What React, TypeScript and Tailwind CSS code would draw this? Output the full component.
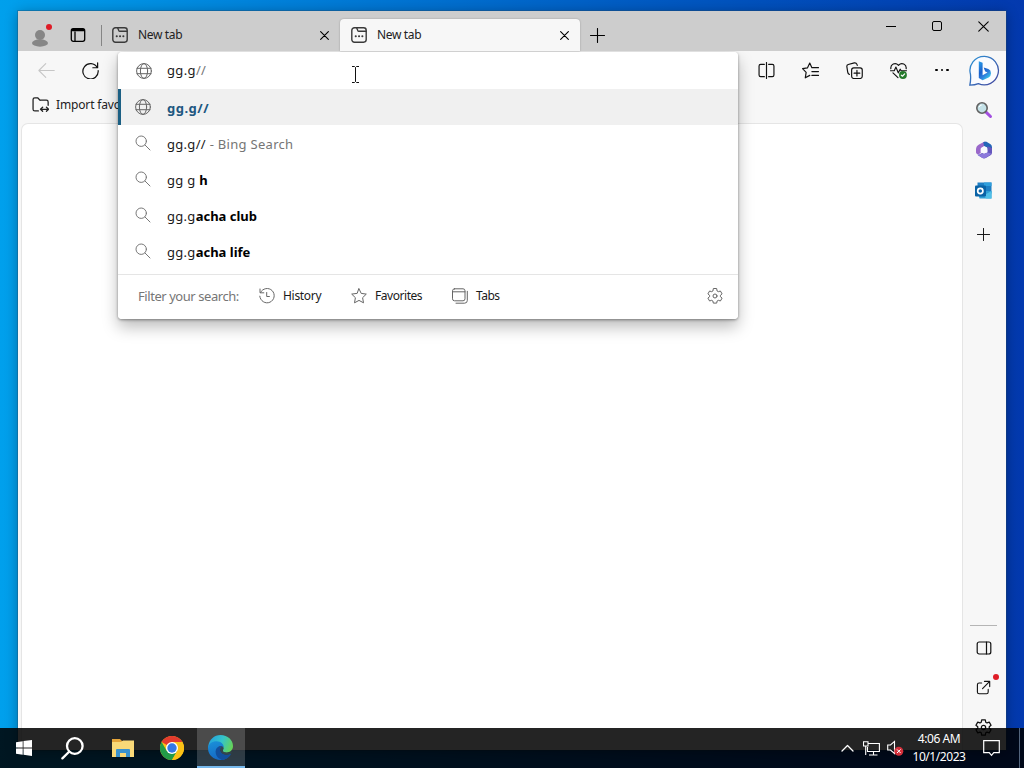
import type { ReactNode } from "react";

interface IconProps {
  size?: number;
  box?: number;
  width?: number;
  className?: string;
  children: ReactNode;
}

const Icon = ({ size = 16, box = 16, width = 1, className = "", children }: IconProps) => (
  <svg
    width={size}
    height={size}
    viewBox={`0 0 ${box} ${box}`}
    fill="none"
    stroke="currentColor"
    strokeWidth={width}
    strokeLinecap="round"
    strokeLinejoin="round"
    className={`shrink-0 ${className}`}
  >
    {children}
  </svg>
);

const GEAR =
  "M6.3 .9 5.9 3 4.7 3.7 2.6 3 .9 5.9 2.6 7.3V8.7L.9 10.1 2.6 13 4.7 12.3 5.9 13 6.3 15.1H9.7L10.1 13 11.3 12.3 13.4 13 15.1 10.1 13.4 8.7V7.3L15.1 5.9 13.4 3 11.3 3.7 10.1 3 9.7 .9Z";
const STAR =
  "M8 .8 10.2 5.4 15.3 6.1 11.6 9.7 12.5 14.8 8 12.4 3.5 14.8 4.4 9.7.7 6.1 5.8 5.4Z";

const GearIcon = ({ size = 16, width = 1 }: { size?: number; width?: number }) => (
  <Icon size={size} width={width}>
    <path d={GEAR} />
    <circle cx="8" cy="8" r="2" />
  </Icon>
);

const GlobeIcon = () => (
  <Icon width={1} className="text-[#666]">
    <circle cx="8" cy="8" r="7.4" />
    <ellipse cx="8" cy="8" rx="3.6" ry="7.4" />
    <path d="M1 5.3H15M1 10.7H15" />
  </Icon>
);

const NewTabIcon = () => (
  <Icon width={1.4} className="text-[#3a3a3a]">
    <rect x=".8" y=".8" width="14.4" height="14.4" rx="2.6" />
    <path d="M5.7 1 6.8 3.6Q7.1 4.2 7.8 4.2H15" />
    <path d="M4.7 9.2h.1M8 9.2h.1M11.3 9.2h.1" strokeWidth="2" />
  </Icon>
);

const CloseIcon = ({ size = 9, width = 1.2 }: { size?: number; width?: number }) => (
  <Icon size={size} box={10} width={width}>
    <path d="M.7.7 9.3 9.3M9.3.7.7 9.3" />
  </Icon>
);

const PlusIcon = ({ size }: { size: number }) => (
  <Icon size={size} box={15} width={1.1}>
    <path d="M7.5.5V14.5M.5 7.5H14.5" />
  </Icon>
);

const Tab = ({ active = false }: { active?: boolean }) => (
  <div
    className={`flex h-8 items-center rounded-t-[4px] pl-[11px] pr-[11px] ${
      active ? "w-[240px] bg-[#f7f7f7] shadow-[0_0_2px_#0004]" : "w-[239px] pr-[10px]"
    }`}
  >
    <NewTabIcon />
    <span className="ml-[10px] flex-1 text-[12px] tracking-[-0.35px] text-[#222]">New tab</span>
    <CloseIcon />
  </div>
);

const TabStrip = () => (
  <div className="flex h-10 shrink-0 items-end bg-[#cdcdcd]">
    <div className="flex h-8 items-center">
      <svg width="24" height="24" viewBox="0 0 24 24" className="ml-[11px]">
        <circle cx="11" cy="12" r="5" fill="#868686" />
        <ellipse cx="11" cy="20" rx="8" ry="3.7" fill="#868686" />
        <circle cx="20" cy="4" r="3" fill="#df1c27" />
      </svg>
      <Icon className="ml-[17px] text-black" width={1.3}>
        <rect x="1.3" y="1.7" width="13.4" height="12.6" rx="2" />
        <path d="M2.3 3H13.7" strokeWidth="2.4" />
        <path d="M5 5V14" />
      </Icon>
      <div className="ml-[15px] h-[21px] w-px bg-[#858585]" />
    </div>
    <div className="-ml-px flex">
      <Tab />
      <Tab active />
    </div>
    <div className="ml-[10px] flex h-8 items-center">
      <PlusIcon size={15} />
    </div>
    <div className="ml-auto flex self-start text-black">
      <div className="flex h-[30px] w-[46px] items-center justify-center">
        <div className="h-px w-[10px] bg-black" />
      </div>
      <div className="flex h-[30px] w-[46px] items-center justify-center">
        <div className="size-[10px] rounded-[2px] border border-black" />
      </div>
      <div className="flex h-[30px] w-[46px] items-center justify-center">
        <CloseIcon size={11} width={1} />
      </div>
    </div>
  </div>
);

const ToolButton = ({ children }: { children: ReactNode }) => (
  <div className="flex w-11 items-center justify-center">{children}</div>
);

const Toolbar = () => (
  <div className="flex h-[38px] shrink-0 pl-[6px] text-[#111]">
    <ToolButton>
      <Icon size={17} className="text-[#c6c6c6]">
        <path d="M15.3 8H.8M7.3 1.5.8 8 7.3 14.5" />
      </Icon>
    </ToolButton>
    <ToolButton>
      <Icon size={17} width={1.15}>
        <path d="M14.3 5.2A7.2 7.2 0 1 0 15.2 8M14.7.8V5.4H10.2" />
      </Icon>
    </ToolButton>
    <div className="-mr-px ml-auto flex">
      <ToolButton>
        <Icon size={17} width={1.1}>
          <path d="M6 2.2H2.5Q1 2.2 1 3.7V12.3Q1 13.8 2.5 13.8H6M10 2.2H13.5Q15 2.2 15 3.7V12.3Q15 13.8 13.5 13.8H10M8 .5V15.5" />
        </Icon>
      </ToolButton>
      <ToolButton>
        <Icon size={17} width={1.1}>
          <path d="M9.3 5.3 7.3 1 5.1 5.6.5 6.3 3.9 9.7 3.1 14.9 7.3 12.6M9.3 5.3H15.5M9.3 9H15.5M9.3 12.6H15.5" />
        </Icon>
      </ToolButton>
      <ToolButton>
        <Icon size={17} width={1.1}>
          <rect x="5.3" y="5.5" width="10" height="10" rx="2" />
          <path d="M10.3 7.8V13.2M7.6 10.5H13M3.2 11.7Q1.8 11 1.6 9.5L.8 4.3Q.6 2.8 2.1 2.3L7.8.8Q9.6.5 10.2 2L10.6 3.2" />
        </Icon>
      </ToolButton>
      <ToolButton>
        <Icon size={17} width={1.1}>
          <path d="M.8 6.2C.3 2.2 4.9-.1 8 3.1 11.1-.1 15.7 2.2 15.2 6.2M.5 8.2H4L5.6 4.8 7.8 10.2 9.6 6.8 10.5 8.2H15.5M2.8 10.2 7.5 14.7" />
          <circle cx="12.2" cy="12.2" r="3.7" fill="#247a2b" stroke="none" />
          <path d="M10.6 12.3 11.7 13.4 13.8 11.2" stroke="#fff" />
        </Icon>
      </ToolButton>
      <ToolButton>
        <div className="flex gap-[3px]">
          <i className="size-[2.5px] rounded-full bg-black" />
          <i className="size-[2.5px] rounded-full bg-black" />
          <i className="size-[2.5px] rounded-full bg-black" />
        </div>
      </ToolButton>
    </div>
  </div>
);

const FavoritesBar = () => (
  <div className="flex h-[34px] shrink-0 items-center pb-[3px] pl-[14px] text-[#222]">
    <Icon size={17} width={1.2}>
      <path d="M6 14H2.6Q1 14 1 12.4V3.3Q1 1.7 2.6 1.7H5.3L7.5 3.9H13.5Q15.2 3.9 15.2 5.6V8.8M5.3 1.8 7.6 4" />
      <path d="M8.2 12.5H15.3M10 10.6 8 12.5 10 14.4M13.6 10.6 15.6 12.5 13.6 14.4" />
    </Icon>
    <span className="ml-[7px] text-[12px] tracking-[-0.15px]">Import favorites</span>
  </div>
);

const BingIcon = () => (
  <svg width="32" height="32" viewBox="0 0 32 32">
    <defs>
      <linearGradient id="bing-ring" x1="0" y1="0" x2="1" y2="1">
        <stop offset="0" stopColor="#2b93d6" />
        <stop offset="1" stopColor="#44449c" />
      </linearGradient>
      <linearGradient id="bing-b" x1="0" y1="0" x2="0.6" y2="1">
        <stop offset="0" stopColor="#2ba0ea" />
        <stop offset="0.5" stopColor="#1a5fcc" />
        <stop offset="0.75" stopColor="#2f7fdc" />
        <stop offset="1" stopColor="#36c4e8" />
      </linearGradient>
    </defs>
    <path
      d="M16.5 1.3A14.3 14.3 0 1 1 10.4 28.7Q7 30.2 1.8 30.2 3 25 2.5 19.5A14.3 14.3 0 0 1 16.5 1.3Z"
      fill="#fafbff"
      stroke="url(#bing-ring)"
      strokeWidth="1.3"
    />
    <path
      d="M10.8 6.2 14.6 7.7V20.3L19.5 17.5 17.2 16.4 15.7 12.4 20.4 14Q23 15 23 18.2 23 21 20.6 22.4L14.6 25.3 10.8 22.9Z"
      fill="url(#bing-b)"
    />
  </svg>
);

const SidebarSearch = () => (
  <svg width="18" height="18" viewBox="0 0 18 18">
    <path d="M11 11.2 15.5 15.5" stroke="#a34fe0" strokeWidth="3" strokeLinecap="round" />
    <circle cx="7" cy="7" r="5.2" fill="#c5e2e8" stroke="#626262" strokeWidth="1.6" />
    <path d="M4.1 6.2Q4.6 4.2 6.8 4" stroke="#fff" fill="none" />
  </svg>
);

const Microsoft365 = () => (
  <svg width="18" height="18" viewBox="0 0 18 18">
    <path d="M9.8.6 4 3.5Q1 5 1 8.5V11.5Q1.4 13.7 3.6 13.2L5.7 12V7.5L11.5 3.8V1Z" fill="#9a68ca" />
    <path d="M8.3.9 11.5.7 15.6 3.3Q17 4.2 17 6.2V11L12.2 8.2V6.6L9 5Z" fill="#2465b8" />
    <path d="M17 7V11.8Q17 13.5 15.5 14.3L10.8 17Q9 17.9 7 16.7L2.3 13.8Q4.5 14 6.3 12.3L12.3 11.8 12.4 5.2Z" fill="#6557bd" />
    <path d="M2.3 13.7 8.6 12.8 12.6 11.4 16.5 12.8 10.8 16.8Q9 17.8 7 16.7Z" fill="#8c79dc" />
    <path d="M6 7.1 9 5.3 12.3 7.1V10.9L9 12.7 5.8 11.1Z" fill="#f9f9ff" />
  </svg>
);

const OutlookIcon = () => (
  <svg width="17" height="17" viewBox="0 0 17 17">
    <rect x="2.5" y=".5" width="14" height="11" fill="#1f7fc4" />
    <path d="M9 .5H16.5V4H9Z" fill="#2f9fdc" />
    <path d="M2.5 9 16.5 9V16.5H4.5Z" fill="#2f9ed4" />
    <path d="M16.5 9 9 13.2 11 16.5H16.5Z" fill="#4fbfe8" />
    <rect x="0" y="3.5" width="11" height="11" rx="1" fill="#0a63a6" />
    <circle cx="5.3" cy="9" r="2.6" fill="none" stroke="#fff" strokeWidth="1.7" />
  </svg>
);

const Sidebar = () => (
  <div className="flex w-[43px] shrink-0 flex-col items-center pr-[2px] text-[#111]">
    <div className="mt-[4px] h-8">
      <BingIcon />
    </div>
    <div className="mt-[5px] flex h-10 items-center pb-[5px]">
      <SidebarSearch />
    </div>
    <div className="flex h-10 items-center pb-[4px]">
      <Microsoft365 />
    </div>
    <div className="flex h-10 items-center pb-[4px]">
      <OutlookIcon />
    </div>
    <div className="mt-[16px]">
      <PlusIcon size={13} />
    </div>
    <div className="mt-auto h-px w-[27px] bg-[#b5b5b5]" />
    <div className="flex h-[43px] items-center">
      <Icon width={1.2}>
        <rect x="1.2" y="2" width="13.6" height="12" rx="2" />
        <path d="M10.5 2V14" />
      </Icon>
    </div>
    <div className="relative flex h-[37px] items-center">
      <Icon width={1.2} size={15}>
        <path d="M6 3.2H3.4Q1.5 3.2 1.5 5.1V12.8Q1.5 14.7 3.4 14.7H11.2Q13 14.7 13 12.8V10M9 1.5H14.6V7M14.3 1.8 7 9.2" />
      </Icon>
      <span className="absolute -right-[8px] top-[5px] size-[6px] rounded-full bg-[#df1c27]" />
    </div>
    <div className="flex h-[44px] items-center pb-[2px]">
      <GearIcon size={17} width={1.2} />
    </div>
  </div>
);

const SearchIcon = () => (
  <Icon width={1} className="mb-[1px] text-[#777]">
    <circle cx="6.2" cy="6.2" r="5.2" />
    <path d="M10 10 15 15" />
  </Icon>
);

const suggestions = [
  { typed: "gg.g//", note: " - Bing Search" },
  { typed: "gg g ", rest: "h" },
  { typed: "gg.g", rest: "acha club" },
  { typed: "gg.g", rest: "acha life" },
];

const AddressPopup = () => (
  <div className="absolute left-[100px] top-[41px] flex h-[267px] w-[620px] flex-col overflow-hidden rounded-[4px] bg-white text-[13px] text-[#1a1a1a]">
    <div className="flex h-[37px] items-center pl-[18px]">
      <GlobeIcon />
      <span className="ml-[15px] mt-px tracking-[0.35px]">
        gg.g<span className="text-[#777]">//</span>
      </span>
    </div>
    <div className="flex h-9 items-center border-l-[3px] border-[#1b5f83] bg-[#f0f0f0] pl-[14px]">
      <GlobeIcon />
      <span className="ml-4 mt-[3px] font-bold tracking-[0.5px] text-[#205780]">gg.g//</span>
    </div>
    {suggestions.map((item, index) => (
      <div key={index} className="flex h-9 items-center pl-[17px]">
        <SearchIcon />
        <span className="ml-4 mt-[3px] whitespace-pre tracking-[0.3px]">
          {item.typed}
          <b className="tracking-[0px] text-black">{item.rest}</b>
          <span className="text-[#757575]">{item.note}</span>
        </span>
      </div>
    ))}
    <div className="mt-[5px] flex h-11 items-center border-t border-[#e5e5e5] pb-px pl-5 pr-[15px] text-[12px] tracking-[-0.3px]">
      <span className="mt-px w-[121px] text-[13px] tracking-[-0.44px] text-[#767676]">Filter your search:</span>
      <div className="flex w-[92px] items-center gap-2">
        <Icon className="text-[#666]">
          <path d="M1 1V4.8H4.8M1.5 4.5A7.2 7.2 0 1 1 .8 8.2M7.7 4.5V8.5H10.4" />
        </Icon>
        History
      </div>
      <div className="flex w-[101px] items-center gap-2 tracking-[-0.45px]">
        <Icon className="text-[#666]">
          <path d={STAR} />
        </Icon>
        Favorites
      </div>
      <div className="flex items-center gap-2 tracking-[-0.5px]">
        <Icon className="text-[#666]">
          <rect x=".5" y=".8" width="12.5" height="12" rx="2" />
          <path d="M.5 3.8H13M15.3 3.3V12.5Q15.3 15.2 12.5 15.2H4" />
        </Icon>
        Tabs
      </div>
      <div className="ml-auto text-[#666]">
        <GearIcon />
      </div>
    </div>
  </div>
);

const Browser = () => (
  <div className="absolute left-[18px] top-[11px] flex h-[739px] w-[988px] flex-col bg-[#f7f7f7] shadow-[0_0_0_1px_#234c6855,0_2px_12px_#0005]">
    <TabStrip />
    <div className="flex min-h-0 flex-1">
      <div className="flex flex-1 flex-col">
        <Toolbar />
        <FavoritesBar />
        <div className="ml-[3px] flex-1 rounded-t-[7px] border border-b-0 border-[#e5e5e5] bg-white" />
      </div>
      <Sidebar />
    </div>
    <div className="absolute left-[100px] top-[41px] h-[267px] w-[620px] rounded-[4px] shadow-[0_8px_16px_#0004,0_1px_3px_#0006] [clip-path:inset(-1px_-30px_-40px_-30px)]" />
    <AddressPopup />
    <svg width="9" height="17" viewBox="0 0 9 17" className="absolute left-[333px] top-[55px]">
      <path d="M1 .5H3.5L4.5 1.5 5.5.5H8M4.5 1.5V15.5M1 16.5H3.5L4.5 15.5 5.5 16.5H8" fill="none" stroke="#111" />
    </svg>
  </div>
);

const WindowsLogo = () => (
  <svg width="16" height="16" viewBox="0 0 16 16" fill="#fff">
    <path d="M0 2.2 6.7 1.2V7.5H0ZM7.5 1.1 16 0V7.5H7.5ZM0 8.4H6.7V14.7L0 13.8ZM7.5 8.4H16V16L7.5 14.8Z" />
  </svg>
);

const FolderIcon = () => (
  <svg width="22" height="19" viewBox="0 0 22 19">
    <path d="M0 0H8L10 2H22V18H0Z" fill="#e5a53a" />
    <path d="M0 3H9L11 1.5H22V18H0Z" fill="#f9d978" />
    <path d="M4 18V11Q4 10 5 10H17Q18 10 18 11V18H14V14H8V18Z" fill="#3992ce" />
  </svg>
);

const ChromeIcon = () => (
  <svg width="24" height="24" viewBox="0 0 24 24">
    <circle cx="12" cy="12" r="12" fill="#fbc116" />
    <path d="M12 12 1.6 6A12 12 0 0 1 22.4 6H12Z" fill="#e33b2e" />
    <path d="M12 12 6.8 15 1.6 6A12 12 0 0 0 12 24L17.2 15Z" fill="#229b48" />
    <path d="M12 6H22.4A12 12 0 0 1 12 24L17.2 15Z" fill="#fbc116" />
    <circle cx="12" cy="12" r="6" fill="#fff" />
    <circle cx="12" cy="12" r="4.7" fill="#3478e5" />
  </svg>
);

const EdgeIcon = () => (
  <svg width="25" height="25" viewBox="0 0 24 24">
    <defs>
      <linearGradient id="edge-top" x1="0" y1="0.2" x2="1" y2="0.5">
        <stop offset="0" stopColor="#229fdf" />
        <stop offset="0.55" stopColor="#35c4c9" />
        <stop offset="1" stopColor="#65d35b" />
      </linearGradient>
      <linearGradient id="edge-body" x1="0.2" y1="0" x2="0.5" y2="1">
        <stop offset="0" stopColor="#1a8fd8" />
        <stop offset="1" stopColor="#1567c4" />
      </linearGradient>
    </defs>
    <path
      d="M.2 11C1 4.4 6 0 12 0 19 0 24 5 24 10.5 24 14.3 21.2 16.7 17.8 16.7 15 16.7 13.6 15.7 14.5 14.3 16 11.5 13.5 8.2 9 8.2 4.5 8.2 1.2 10.4.2 14Z"
      fill="url(#edge-top)"
    />
    <path
      d="M.1 12.5C.5 8.5 4 6 8.2 6 12.7 6 15.5 9.2 15 12.2 13.8 10 10.8 10 9.5 12.5 7.8 16 10.7 20.5 15.4 20.5 18.5 20.5 20.7 19.5 21.8 18.7 19.7 22 16 24 12 24 5 24-.4 18.7.1 12.5Z"
      fill="url(#edge-body)"
    />
    <path
      d="M9.5 11.6C5.5 14.5 7 22 13.3 23.9 17.2 23.7 20.2 21.6 21.8 18.7 22 18 21.5 17.9 20.8 18.3 15.5 20.3 10.8 16.8 12 13 12.4 11.8 13.3 11.3 14.6 11.9 13.3 10.3 11 10.4 9.5 11.6Z"
      fill="#124f9d"
    />
    <path
      d="M12 12.8C10.9 16.5 15.2 20.3 20.8 18.3 22 17.8 22.6 17 22.9 16 20 18 15.4 17.4 14.3 15.6 13.5 14.5 14.8 14.1 14.9 12.4 14 11.3 12.4 11.4 12 12.8Z"
      fill="#33464f"
    />
  </svg>
);

const Taskbar = () => (
  <div className="absolute inset-x-0 bottom-0 flex h-10 bg-black/86 text-white">
    <div className="flex w-12 items-center justify-center">
      <WindowsLogo />
    </div>
    <div className="flex w-12 items-center justify-center">
      <Icon size={23} box={23} width={2.3}>
        <circle cx="13.8" cy="9" r="7.8" />
        <path d="M8.1 14.7 1.4 21.4" />
      </Icon>
    </div>
    <div className="flex w-[53px] items-center justify-center">
      <FolderIcon />
    </div>
    <div className="flex w-12 items-center justify-center pr-[3px]">
      <ChromeIcon />
    </div>
    <div className="flex w-12 items-center justify-center border-b-2 border-[#76b9ed] bg-white/18 pr-px pt-px">
      <EdgeIcon />
    </div>
    <div className="ml-auto flex items-center">
      <Icon size={13} box={13} width={1.3}>
        <path d="M1 9 6.5 3.5 12 9" />
      </Icon>
      <svg
        width="17"
        height="15"
        viewBox="0 0 17 15"
        fill="none"
        stroke="#fff"
        strokeWidth="1.1"
        className="ml-[9px]"
      >
        <path d="M5 2.5H16.4V10.5H4.5V6M10.5 10.5V14M6 14H14.5M.5.7H5V5H.5ZM2.7 5V14" />
      </svg>
      <svg width="17" height="16" viewBox="0 0 17 16" className="ml-[7px]">
        <path d="M.7 5H3.5L7.5 1.4V13.5L3.5 10H.7Z" fill="none" stroke="#fff" strokeWidth="1.1" />
        <circle cx="11.8" cy="11.2" r="4.5" fill="#d4303b" />
        <path d="M10 9.4 13.6 13M13.6 9.4 10 13" stroke="#fff" />
      </svg>
      <div className="ml-[5px] flex w-[60px] flex-col items-center whitespace-nowrap text-[12px] leading-[18px] tracking-[-0.45px]">
        <span>4:06 AM</span>
        <span>10/1/2023</span>
      </div>
      <svg
        width="17"
        height="17"
        viewBox="0 0 17 17"
        className="ml-[14px] mr-[24px]"
        fill="none"
        stroke="#fff"
        strokeWidth="1.2"
      >
        <path d="M.7.7H16.3V12.7H10.8L8.5 15.3 6.2 12.7H.7Z" />
      </svg>
    </div>
    <div className="absolute right-[4px] top-0 h-10 w-px bg-[#53657d]" />
  </div>
);

export default function App() {
  return (
    <div className="relative h-[768px] w-[1024px] overflow-hidden bg-[linear-gradient(to_right,#00a0ec_0,#0084dc_24%,#005dc4_60%,#0339ae)] font-['Noto_Sans','Open_Sans',sans-serif]">
      <Browser />
      <Taskbar />
    </div>
  );
}
